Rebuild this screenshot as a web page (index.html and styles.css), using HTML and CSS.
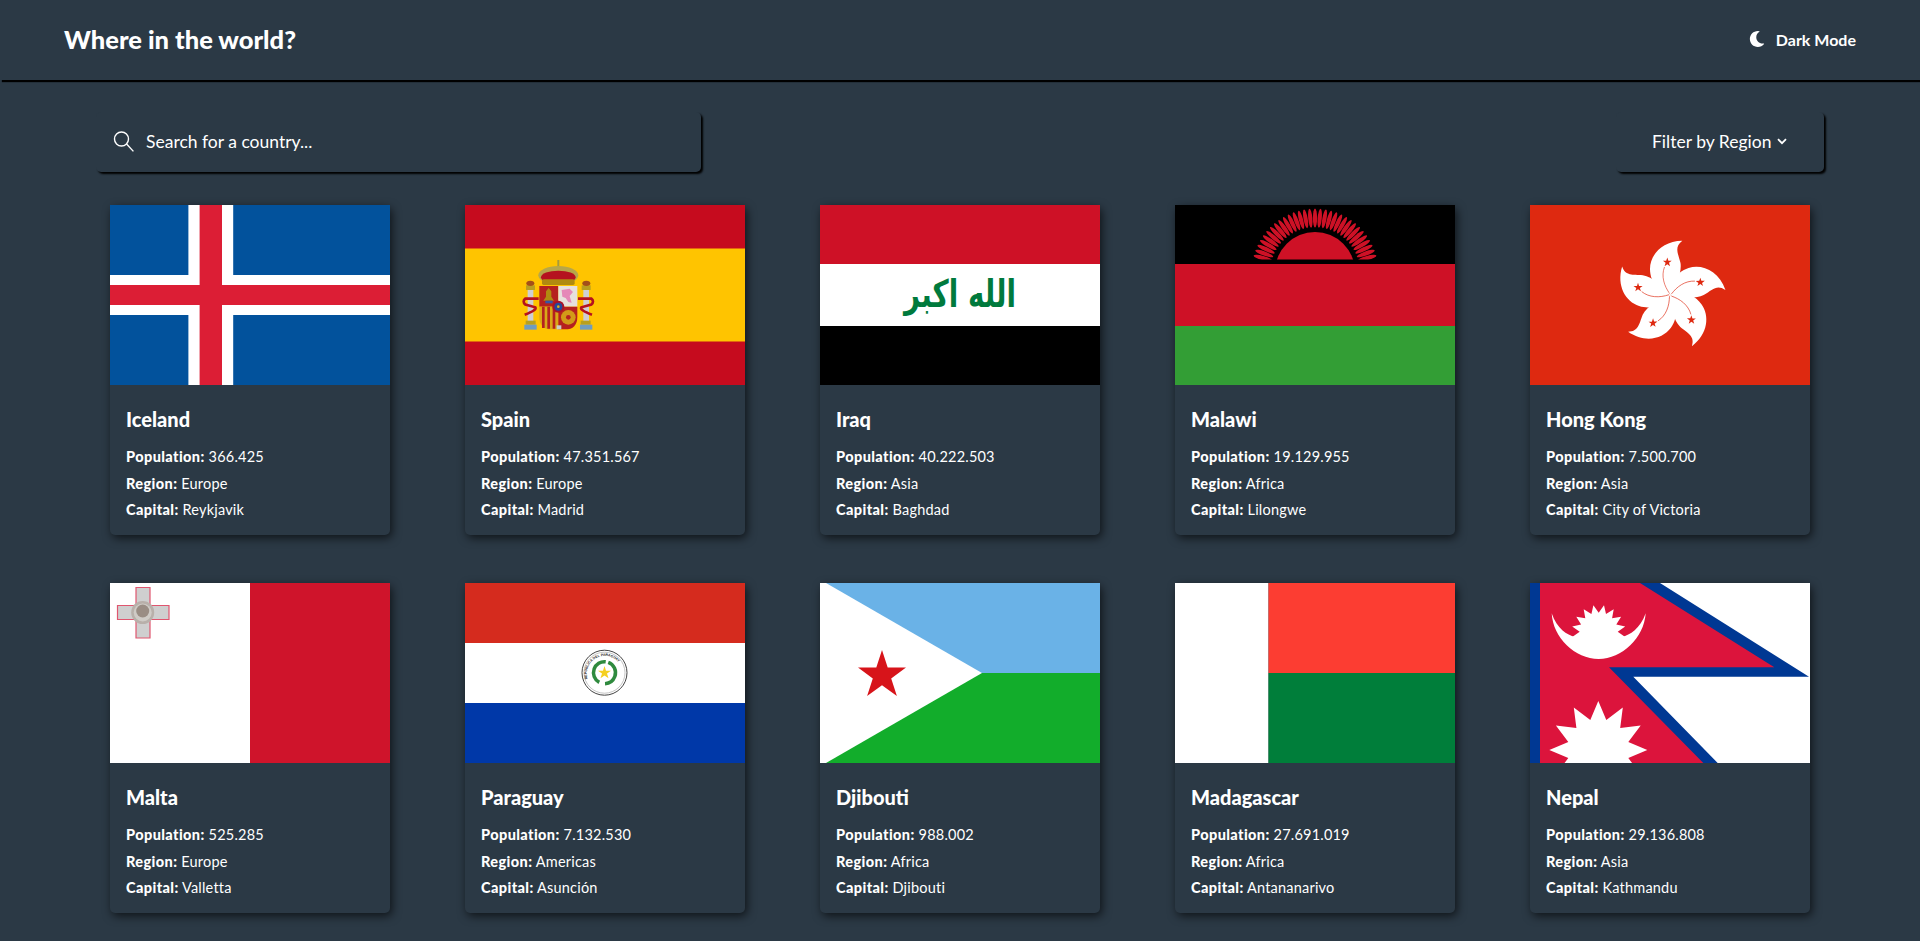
FILE: index.html
```html
<!DOCTYPE html>
<html lang="en">
<head>
    <meta charset="UTF-8">
    <meta name="viewport" content="width=device-width, initial-scale=1.0">
    <title>Where in the world?</title>
    <link rel="stylesheet" href="styles.css">
</head>
<body>
    <header class="topbar">
        <h1 class="brand">Where in the world?</h1>
        <button class="mode-toggle">
            <svg class="moon" viewBox="0 0 512 512"><path d="M283.211 512c78.962 0 151.079-35.925 198.857-94.792 7.068-8.708-.639-21.43-11.562-19.35-124.203 23.654-238.262-71.576-238.262-196.954 0-72.222 38.662-138.635 101.498-174.394 9.686-5.512 7.25-20.197-3.756-22.23A258.156 258.156 0 0 0 283.211 0c-141.309 0-256 114.511-256 256 0 141.309 114.511 256 256 256z"/></svg>
            Dark Mode
        </button>
    </header>

    <main>
        <section class="toolbar">
            <div class="search">
                <svg class="search-icon" viewBox="0 0 21 21"><circle cx="8.5" cy="8" r="7"/><path d="M13.6 13 L20.4 20.4"/></svg>
                <span class="search-text">Search for a country...</span>
            </div>
            <div class="filter">
                <span>Filter by Region</span>
                <svg class="chevron" viewBox="0 0 10 7"><path d="M1 1.2 L5 5.2 L9 1.2"/></svg>
            </div>
        </section>

        <section class="grid">
            <article class="card">
                <svg class="flag" viewBox="0 0 280 180" preserveAspectRatio="none">
                    <rect width="280" height="180" fill="#02529c"/>
                    <rect x="78.4" width="44.8" height="180" fill="#fff"/>
                    <rect y="70" width="280" height="40" fill="#fff"/>
                    <rect x="89.6" width="22.4" height="180" fill="#dc1e35"/>
                    <rect y="80" width="280" height="20" fill="#dc1e35"/>
                </svg>
                <div class="card-body">
                    <h2>Iceland</h2>
                    <p><b>Population:</b> 366.425</p>
                    <p><b>Region:</b> Europe</p>
                    <p><b>Capital:</b> Reykjavik</p>
                </div>
            </article>

            <article class="card">
                <svg class="flag" viewBox="0 0 280 180" preserveAspectRatio="none">
                    <rect width="280" height="180" fill="#c60b1e"/>
                    <rect y="43.5" width="280" height="93" fill="#ffc400"/>
                    <!-- coat of arms, drawn at 3x -->
                    <g transform="translate(-5 -5) scale(.3333)">
                        <rect x="292" y="180" width="6" height="30" fill="#a89a3a"/>
                        <ellipse cx="295" cy="226" rx="60" ry="28" fill="#b7a64a"/>
                        <ellipse cx="295" cy="232" rx="52" ry="20" fill="#b5121f"/>
                        <rect x="246" y="238" width="98" height="17" rx="5" fill="#b08a10"/>
                        <rect x="238" y="258" width="57" height="62" fill="#b5211f"/>
                        <rect x="295" y="258" width="57" height="62" fill="#e6e0dc"/>
                        <path d="M238 320 H295 V388 H275 Q238 388 238 350 Z" fill="#d8a818"/>
                        <path d="M246 320 h8 v64 h-8 Z M262 320 h8 v66 h-8 Z M278 320 h8 v66 h-8 Z" fill="#b5211f"/>
                        <path d="M295 320 H352 V350 Q352 388 315 388 H295 Z" fill="#b5211f"/>
                        <circle cx="325" cy="352" r="22" fill="#d29a18"/>
                        <circle cx="325" cy="352" r="7" fill="#b5211f"/>
                        <path d="M266 264 l8 10 v16 l8 12 h-32 l8 -12 v-16 Z" fill="#b08a10"/>
                        <path d="M256 302 h22 v8 h-22 Z" fill="#3555a8"/>
                        <path d="M305 270 l24 -4 l10 10 l-10 12 l6 20 l-10 -2 l-8 -12 l-10 -4 Z" fill="#e588b8"/>
                        <circle cx="295" cy="320" r="18" fill="#a8122a"/>
                        <circle cx="295" cy="320" r="12" fill="#23489c"/>
                        <circle cx="295" cy="320" r="4" fill="#d8b020"/>
                        <rect x="290" y="376" width="14" height="12" fill="#c8d0c8"/>
                        <rect x="203" y="270" width="17" height="94" fill="#cfcfd4"/>
                        <rect x="370" y="270" width="17" height="94" fill="#cfcfd4"/>
                        <rect x="198" y="256" width="27" height="14" fill="#b8a020"/>
                        <rect x="365" y="256" width="27" height="14" fill="#b8a020"/>
                        <ellipse cx="211" cy="250" rx="12" ry="8" fill="#a3501a"/>
                        <ellipse cx="379" cy="250" rx="12" ry="8" fill="#a3501a"/>
                        <rect x="197" y="362" width="30" height="12" fill="#b8a020"/>
                        <rect x="362" y="362" width="30" height="12" fill="#b8a020"/>
                        <rect x="193" y="374" width="37" height="15" fill="#6f9cc0"/>
                        <rect x="360" y="374" width="37" height="15" fill="#6f9cc0"/>
                        <path d="M236 296 H196 Q186 304 196 314 L226 322 Q232 330 194 344" fill="none" stroke="#b5121f" stroke-width="8"/>
                        <path d="M354 296 H394 Q404 304 394 314 L364 322 Q358 330 396 344" fill="none" stroke="#b5121f" stroke-width="8"/>
                    </g>
                </svg>
                <div class="card-body">
                    <h2>Spain</h2>
                    <p><b>Population:</b> 47.351.567</p>
                    <p><b>Region:</b> Europe</p>
                    <p><b>Capital:</b> Madrid</p>
                </div>
            </article>

            <article class="card">
                <svg class="flag" viewBox="0 0 280 180" preserveAspectRatio="none">
                    <rect width="280" height="59" fill="#ce1126"/>
                    <rect y="59" width="280" height="62" fill="#fff"/>
                    <rect y="121" width="280" height="59" fill="#000"/>
                    <text class="takbir" x="140" y="102" text-anchor="middle" textLength="112" lengthAdjust="spacingAndGlyphs">الله اكبر</text>
                </svg>
                <div class="card-body">
                    <h2>Iraq</h2>
                    <p><b>Population:</b> 40.222.503</p>
                    <p><b>Region:</b> Asia</p>
                    <p><b>Capital:</b> Baghdad</p>
                </div>
            </article>

            <article class="card">
                <svg class="flag" viewBox="0 0 280 180" preserveAspectRatio="none">
                    <defs>
                        <ellipse id="ray" cx="140" cy="13" rx="2.1" ry="9.5" fill="#ce1126"/>
                        <clipPath id="above-band"><rect width="280" height="54.5"/></clipPath>
                    </defs>
                    <rect width="280" height="59" fill="#000"/>
                    <rect y="59" width="280" height="62" fill="#ce1126"/>
                    <rect y="121" width="280" height="59" fill="#339e35"/>
                    <g clip-path="url(#above-band)">
                        <circle cx="140" cy="67" r="40" fill="#ce1126"/>
                        <use href="#ray" transform="rotate(-75 140 67)"/><use href="#ray" transform="rotate(-70 140 67)"/><use href="#ray" transform="rotate(-65 140 67)"/><use href="#ray" transform="rotate(-60 140 67)"/><use href="#ray" transform="rotate(-55 140 67)"/><use href="#ray" transform="rotate(-50 140 67)"/><use href="#ray" transform="rotate(-45 140 67)"/><use href="#ray" transform="rotate(-40 140 67)"/><use href="#ray" transform="rotate(-35 140 67)"/><use href="#ray" transform="rotate(-30 140 67)"/><use href="#ray" transform="rotate(-25 140 67)"/><use href="#ray" transform="rotate(-20 140 67)"/><use href="#ray" transform="rotate(-15 140 67)"/><use href="#ray" transform="rotate(-10 140 67)"/><use href="#ray" transform="rotate(-5 140 67)"/><use href="#ray"/><use href="#ray" transform="rotate(5 140 67)"/><use href="#ray" transform="rotate(10 140 67)"/><use href="#ray" transform="rotate(15 140 67)"/><use href="#ray" transform="rotate(20 140 67)"/><use href="#ray" transform="rotate(25 140 67)"/><use href="#ray" transform="rotate(30 140 67)"/><use href="#ray" transform="rotate(35 140 67)"/><use href="#ray" transform="rotate(40 140 67)"/><use href="#ray" transform="rotate(45 140 67)"/><use href="#ray" transform="rotate(50 140 67)"/><use href="#ray" transform="rotate(55 140 67)"/><use href="#ray" transform="rotate(60 140 67)"/><use href="#ray" transform="rotate(65 140 67)"/><use href="#ray" transform="rotate(70 140 67)"/><use href="#ray" transform="rotate(75 140 67)"/>
                    </g>
                </svg>
                <div class="card-body">
                    <h2>Malawi</h2>
                    <p><b>Population:</b> 19.129.955</p>
                    <p><b>Region:</b> Africa</p>
                    <p><b>Capital:</b> Lilongwe</p>
                </div>
            </article>

            <article class="card">
                <svg class="flag" viewBox="0 0 280 180" preserveAspectRatio="none">
                    <defs>
                        <g id="petal">
                            <path d="M0 0 C-10 -1 -20 -12 -20 -26 C-20 -40 -8 -54 12.3 -54.3 C4 -48 8 -42 10.5 -32 C12 -22 6 -10 0 0 Z" fill="#fff"/>
                            <path d="M0 -1 C-6 -9 -9 -19 -5.5 -28" fill="none" stroke="#de2910" stroke-width=".6"/>
                            <polygon points="-2.7,-37.5 -1.6,-34.2 1.7,-34.2 -1,-32.2 0,-28.8 -2.7,-30.8 -5.4,-28.8 -4.4,-32.2 -7.1,-34.2 -3.8,-34.2" fill="#de2910"/>
                        </g>
                    </defs>
                    <rect width="280" height="180" fill="#de2910"/>
                    <g transform="translate(140 90)">
                        <use href="#petal"/>
                        <use href="#petal" transform="rotate(72)"/>
                        <use href="#petal" transform="rotate(144)"/>
                        <use href="#petal" transform="rotate(216)"/>
                        <use href="#petal" transform="rotate(288)"/>
                    </g>
                </svg>
                <div class="card-body">
                    <h2>Hong Kong</h2>
                    <p><b>Population:</b> 7.500.700</p>
                    <p><b>Region:</b> Asia</p>
                    <p><b>Capital:</b> City of Victoria</p>
                </div>
            </article>

            <article class="card">
                <svg class="flag" viewBox="0 0 280 180" preserveAspectRatio="none">
                    <rect width="140" height="180" fill="#fff"/>
                    <rect x="140" width="140" height="180" fill="#cf142b"/>
                    <path d="M26 4.5 H40 V22.5 H59 V36.5 H40 V55 H26 V36.5 H7.5 V22.5 H26 Z" fill="#cfcfcf" stroke="#e0566f" stroke-width="1.2"/>
                    <circle cx="32.7" cy="29.5" r="11.5" fill="#b8b0aa"/>
                    <circle cx="32.7" cy="29.5" r="9" fill="#cfcbc6"/>
                    <circle cx="32.7" cy="28" r="6.5" fill="#9a8d84"/>
                </svg>
                <div class="card-body">
                    <h2>Malta</h2>
                    <p><b>Population:</b> 525.285</p>
                    <p><b>Region:</b> Europe</p>
                    <p><b>Capital:</b> Valletta</p>
                </div>
            </article>

            <article class="card">
                <svg class="flag" viewBox="0 0 280 180" preserveAspectRatio="none">
                    <defs><path id="seal-arc" d="M122.5 96 A18 18 0 1 1 157 96"/></defs>
                    <rect width="280" height="60" fill="#d52b1e"/>
                    <rect y="60" width="280" height="60" fill="#fff"/>
                    <rect y="120" width="280" height="60" fill="#0038a8"/>
                    <circle cx="139.5" cy="89.7" r="22.5" fill="#fff" stroke="#444" stroke-width="1"/>
                    <circle cx="139.5" cy="89.7" r="20.5" fill="none" stroke="#888" stroke-width=".5"/>
                    <text class="seal-text"><textPath href="#seal-arc">REPUBLICA DEL PARAGUAY</textPath></text>
                    <circle cx="139.5" cy="89.7" r="11" fill="none" stroke="#2f8a3e" stroke-width="3.5" stroke-dasharray="30 6" transform="rotate(-70 139.5 89.7)"/>
                    <polygon points="139.5,83 141,87.7 146,87.7 142,90.6 143.5,95.3 139.5,92.4 135.5,95.3 137,90.6 133,87.7 138,87.7" fill="#f5d020"/>
                </svg>
                <div class="card-body">
                    <h2>Paraguay</h2>
                    <p><b>Population:</b> 7.132.530</p>
                    <p><b>Region:</b> Americas</p>
                    <p><b>Capital:</b> Asunción</p>
                </div>
            </article>

            <article class="card">
                <svg class="flag" viewBox="0 0 280 180" preserveAspectRatio="none">
                    <rect width="280" height="90" fill="#6ab2e7"/>
                    <rect y="90" width="280" height="90" fill="#12ad2b"/>
                    <polygon points="0,0 6,0 162,90 6,180 0,180" fill="#fff"/>
                    <polygon points="62,67 67.7,84.6 86,84.6 71.2,95.5 76.9,113 62,102.2 47.1,113 52.8,95.5 38,84.6 56.3,84.6" fill="#d7141a"/>
                </svg>
                <div class="card-body">
                    <h2>Djibouti</h2>
                    <p><b>Population:</b> 988.002</p>
                    <p><b>Region:</b> Africa</p>
                    <p><b>Capital:</b> Djibouti</p>
                </div>
            </article>

            <article class="card">
                <svg class="flag" viewBox="0 0 280 180" preserveAspectRatio="none">
                    <rect width="93.5" height="180" fill="#fff"/>
                    <rect x="93.5" width="186.5" height="90" fill="#fc3d32"/>
                    <rect x="93.5" y="90" width="186.5" height="90" fill="#007e3a"/>
                </svg>
                <div class="card-body">
                    <h2>Madagascar</h2>
                    <p><b>Population:</b> 27.691.019</p>
                    <p><b>Region:</b> Africa</p>
                    <p><b>Capital:</b> Antananarivo</p>
                </div>
            </article>

            <article class="card">
                <svg class="flag" viewBox="0 0 280 180" preserveAspectRatio="none">
                    <rect width="280" height="180" fill="#fff"/>
                    <polygon points="0,0 130,0 279,93.7 103.3,93.7 187.7,180 0,180" fill="#003893"/>
                    <polygon points="10,0 110,0 244.3,84.3 79,84.3 173.3,180 10,180" fill="#dc143c"/>
                    <path d="M21.7 30.3 C23 55 45 76 68.7 76 C92 76 114 55 115.7 30.3 C110 46 100 52 92 54 H45 C37 52 27 46 21.7 30.3 Z" fill="#fff"/>
                    <polygon transform="translate(68.7 48.7)" points="0,-19 5.3,-26.5 7.3,-17.6 15,-22.4 13.4,-13.4 22.4,-15 17.6,-7.3 26.5,-5.3 19,0 26.5,5.3 17.6,7.3 22.4,15 13.4,13.4 0,19 -13.4,13.4 -22.4,15 -17.6,7.3 -26.5,5.3 -19,0 -26.5,-5.3 -17.6,-7.3 -22.4,-15 -13.4,-13.4 -15,-22.4 -7.3,-17.6 -5.3,-26.5" fill="#fff"/>
                    <polygon transform="translate(68.3 167)" points="0,-49 8,-30 24.5,-42.4 21.9,-21.9 42.4,-24.5 30,-8 49,0 30,8 42.4,24.5 21.9,21.9 24.5,42.4 8,30 0,49 -8,30 -24.5,42.4 -21.9,21.9 -42.4,24.5 -30,8 -49,0 -30,-8 -42.4,-24.5 -21.9,-21.9 -24.5,-42.4 -8,-30" fill="#fff"/>
                </svg>
                <div class="card-body">
                    <h2>Nepal</h2>
                    <p><b>Population:</b> 29.136.808</p>
                    <p><b>Region:</b> Asia</p>
                    <p><b>Capital:</b> Kathmandu</p>
                </div>
            </article>
        </section>
    </main>
</body>
</html>
```

FILE: styles.css
```css
*{
    box-sizing: border-box;
}
html, body{
    height: 100%;
}
body{
    margin: 0;
    overflow: hidden;
    background-color: #2b3945;
    color: #fff;
    font-family: "Lato", "Noto Sans", sans-serif;
}
.topbar{
    display: flex;
    justify-content: space-between;
    align-items: center;
    height: 80px;
    padding: 0 64px 2px 64px;
    background-color: #2b3945;
    box-shadow: 2px 2px 1px #000;
}
.brand{
    margin: 0;
    font-size: 25.5px;
    font-weight: 900;
}
.mode-toggle{
    display: flex;
    align-items: center;
    gap: 11px;
    padding: 0;
    border: 0;
    background: none;
    color: #fff;
    font: 700 16px "Lato", sans-serif;
}
.moon{
    width: 16px;
    height: 16px;
    fill: #fff;
}
.toolbar{
    display: flex;
    justify-content: space-between;
    margin: 32px 96px 33px 96px;
}
.search, .filter{
    display: flex;
    align-items: center;
    height: 60px;
    padding-bottom: 2px;
    border-radius: 5px;
    background-color: #2b3945;
    box-shadow: 2px 2px 2px #000;
    font-size: 17.5px;
}
.search{
    width: 605px;
    padding-left: 17px;
}
.search-icon{
    width: 21px;
    height: 21px;
    margin-right: 12px;
    fill: none;
    stroke: #fff;
    stroke-width: 1.4;
}
.filter{
    width: 208px;
    padding-left: 36px;
}
.chevron{
    width: 10px;
    height: 7px;
    margin-left: 6px;
    fill: none;
    stroke: #fff;
    stroke-width: 1.8;
}
.grid{
    display: grid;
    grid-template-columns: repeat(5, 280px);
    gap: 48px 75px;
    justify-content: center;
}
.card{
    height: 330px;
    border-radius: 5px;
    background-color: #2b3945;
    box-shadow: 2px 3px 10px rgba(0, 0, 0, .65);
}
.flag{
    display: block;
    width: 280px;
    height: 180px;
}
.card-body{
    padding: 21px 16px 0;
}
.card-body h2{
    margin: 0 0 12px;
    font-size: 20px;
    font-weight: 900;
    line-height: 26px;
}
.card-body p{
    margin: 0;
    font-size: 14.5px;
    letter-spacing: .2px;
    line-height: 26.5px;
}
.card-body b{
    font-weight: 900;
    letter-spacing: .4px;
}
.takbir{
    font-family: "DejaVu Sans", sans-serif;
    font-size: 38px;
    font-weight: 700;
    fill: #007a3d;
}
.seal-text{
    font-family: "Liberation Sans", sans-serif;
    font-size: 3.5px;
    font-weight: 700;
    fill: #222;
}
```
